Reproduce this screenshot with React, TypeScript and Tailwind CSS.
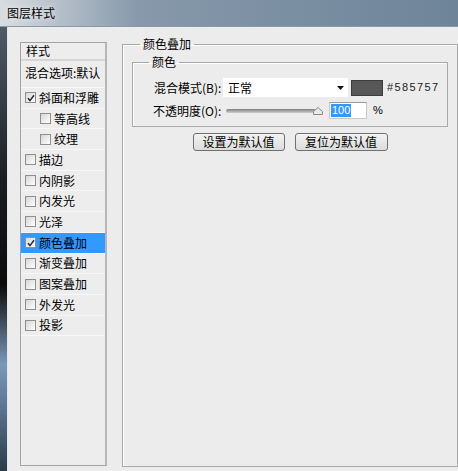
import React from "react";

const items = [
  { label: "斜面和浮雕", checked: true },
  { label: "等高线", indent: true },
  { label: "纹理", indent: true },
  { label: "描边" },
  { label: "内阴影" },
  { label: "内发光" },
  { label: "光泽" },
  { label: "颜色叠加", checked: true, active: true },
  { label: "渐变叠加" },
  { label: "图案叠加" },
  { label: "外发光" },
  { label: "投影" },
];

function CheckBox({ checked }: { checked?: boolean }) {
  return (
    <span className="w-[11px] h-[11px] shrink-0 border border-[#8e8f8f] bg-linear-to-br from-[#d6d6d6] to-white flex items-center justify-center">
      {checked && (
        <svg width="8" height="8" viewBox="0 0 8 8">
          <path d="M1 4.2 L3 6.6 L7 1.2" stroke="#1e2a3a" strokeWidth="1.5" fill="none" />
        </svg>
      )}
    </span>
  );
}

export default function App() {
  return (
    <div
      className="w-[458px] h-[471px] bg-[#ececec] flex flex-col overflow-hidden text-[12px] text-black"
      style={{ fontFamily: '"Noto Sans CJK SC", "Noto Sans", sans-serif' }}
    >
      {/* title bar */}
      <div className="h-[27px] shrink-0 flex items-center pl-[7px] bg-linear-to-r from-[#d9dde1] via-[#8799ab] via-30% to-[#6e8499] border-b border-[#8a9aab]">
        <span className="leading-[14px] [text-shadow:0_0_6px_#fff]">图层样式</span>
      </div>

      <div className="flex-1 flex">
        <div className="w-[7px] shrink-0 bg-[linear-gradient(to_bottom,#505a65_0%,#1a1d21_35%,#0a0a0a_58%,#7a98b8_76%,#5a7490_86%,#2d3a48_100%)]" />

        <div className="flex-1 flex items-start pl-[12px] border-l border-[#e4e7ea]">
          {/* left list */}
          <div className="mt-[15px] w-[87px] h-[424px] border border-[#a3a3a3] border-r-2 border-r-[#b5b5b5] bg-[#ededed] flex flex-col">
            <div className="h-[18px] flex items-center pl-[5px] border-b-2 border-[#d5d5d5] leading-[14px]">样式</div>
            <div className="h-[27px] pl-[4px] pt-[5px] leading-[14px] border-b border-[#f9f9f9] whitespace-nowrap">混合选项:默认</div>
            {items.map((it) => (
              <div
                key={it.label}
                className={`h-[20.7px] flex items-center gap-[3px] border-b border-[#f7f7f7] leading-[14px] ${
                  it.indent ? "pl-[19px]" : "pl-[4px]"
                } ${it.active ? "bg-[#3399ff]" : ""}`}
              >
                <CheckBox checked={it.checked} />
                <span>{it.label}</span>
              </div>
            ))}
          </div>

          {/* right side */}
          <fieldset className="ml-[15px] mt-[9px] w-[336px] h-[431px] border border-[#a9a9a9] shadow-[inset_1px_1px_0_#fff] px-[9px] m-0 min-w-0">
            <legend className="ml-[8px] px-[3px] leading-[16px]">颜色叠加</legend>

            <fieldset className="mt-[2px] border border-[#a9a9a9] shadow-[inset_1px_1px_0_#fff] p-0 pb-[7px] min-w-0">
              <legend className="ml-[16px] px-[3px] leading-[16px]">颜色</legend>

              <div className="mt-[8px] h-[19px] flex items-center pl-[21px]">
                <span className="w-[69px] leading-[14px] whitespace-nowrap">混合模式(B):</span>
                <div className="w-[125px] h-[19px] bg-white flex items-center justify-between pl-[5px] pr-[4px]">
                  <span className="leading-[14px]">正常</span>
                  <svg width="7" height="4" viewBox="0 0 7 4">
                    <path d="M0 0 H7 L3.5 4 Z" fill="#111" />
                  </svg>
                </div>
                <div className="ml-[3px] w-[32px] h-[16px] bg-[#585757] border border-[#3c3c3c]" />
                <span
                  className="ml-[4px] text-[11px] tracking-[1.4px] text-[#222]"
                  style={{ fontFamily: '"Liberation Sans", Arial, sans-serif' }}
                >
                  #585757
                </span>
              </div>

              <div className="mt-[5px] h-[17px] flex items-center pl-[20px]">
                <span className="w-[70px] leading-[14px] whitespace-nowrap">不透明度(O):</span>
                <div className="ml-[3px] w-[98px] h-[17px] flex items-center">
                  <div className="w-[90px] h-[4px] rounded-full bg-linear-to-b from-[#7f7f7f] to-[#cfcfcf]" />
                  <svg width="10" height="8" viewBox="0 0 10 8" className="-ml-[3px] mt-[1px]">
                    <path d="M5 0.5 L9.5 4.5 V7.5 H0.5 V4.5 Z" fill="#e8e8e8" stroke="#8a8a8a" />
                  </svg>
                </div>
                <div
                  className="ml-[5px] w-[38px] h-[17px] bg-white border border-[#c8c8c8] border-t-[#9a9a9a] flex items-center pl-[1px]"
                  style={{ fontFamily: '"Liberation Sans", Arial, sans-serif' }}
                >
                  <span className="bg-[#3399ff] text-white text-[11px] leading-[13px] px-[1px]">100</span>
                </div>
                <span
                  className="ml-[6px] text-[11px]"
                  style={{ fontFamily: '"Liberation Sans", Arial, sans-serif' }}
                >
                  %
                </span>
              </div>
            </fieldset>

            <div className="mt-[6px] flex justify-center gap-[10px]">
              <button className="w-[92px] h-[18px] rounded-[3px] border border-[#707070] bg-linear-to-b from-[#f3f3f3] to-[#dcdcdc] leading-[14px]">
                设置为默认值
              </button>
              <button className="w-[93px] h-[18px] rounded-[3px] border border-[#707070] bg-linear-to-b from-[#f3f3f3] to-[#dcdcdc] leading-[14px]">
                复位为默认值
              </button>
            </div>
          </fieldset>
        </div>
      </div>
    </div>
  );
}
